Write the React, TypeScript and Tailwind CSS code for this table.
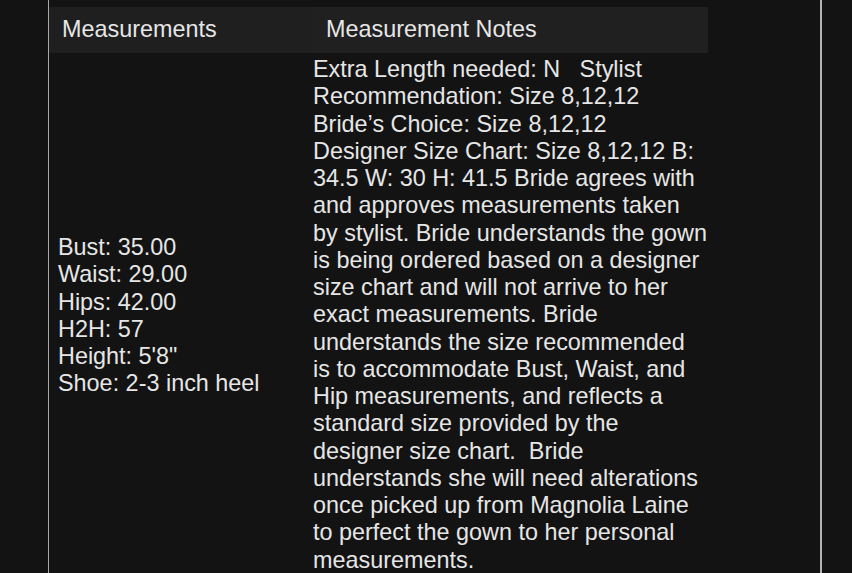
const MEASUREMENTS = [
  'Bust: 35.00',
  'Waist: 29.00',
  'Hips: 42.00',
  'H2H: 57',
  'Height: 5\'8"',
  'Shoe: 2-3 inch heel',
]

const NOTES = [
  'Extra Length needed: N   Stylist',
  'Recommendation: Size 8,12,12',
  'Bride\u2019s Choice: Size 8,12,12',
  'Designer Size Chart: Size 8,12,12 B:',
  '34.5 W: 30 H: 41.5 Bride agrees with',
  'and approves measurements taken',
  'by stylist. Bride understands the gown',
  'is being ordered based on a designer',
  'size chart and will not arrive to her',
  'exact measurements. Bride',
  'understands the size recommended',
  'is to accommodate Bust, Waist, and',
  'Hip measurements, and reflects a',
  'standard size provided by the',
  'designer size chart.  Bride',
  'understands she will need alterations',
  'once picked up from Magnolia Laine',
  'to perfect the gown to her personal',
  'measurements.',
]

export default function App() {
  return (
    <div
      className="h-[573px] w-[852px] overflow-hidden bg-[#131313] text-[#e6e6e6] text-[23.4px] leading-[27.25px]"
      style={{ fontFamily: '"Liberation Sans", Arial, sans-serif' }}
    >
      <div className="ml-[48px] w-[774px] h-full border-l border-l-[#a8a8a8] border-r-2 border-r-[#b4b4b4] pt-[7px]">
        <div className="grid grid-cols-[264px_395px]">
          {/* header */}
          <div className="h-[46px] bg-[#1f1f1f] pl-[13px] flex items-center">Measurements</div>
          <div className="h-[46px] bg-[#202020] pl-[13px] flex items-center">Measurement Notes</div>

          {/* body */}
          <div className="pl-[9px] pt-[5px] flex flex-col justify-center">
            {MEASUREMENTS.map((m) => (
              <div key={m}>{m}</div>
            ))}
          </div>
          <div className="pt-[3px] whitespace-pre">
            {NOTES.map((line, i) => (
              <div key={i}>{line}</div>
            ))}
          </div>
        </div>
      </div>
    </div>
  )
}
